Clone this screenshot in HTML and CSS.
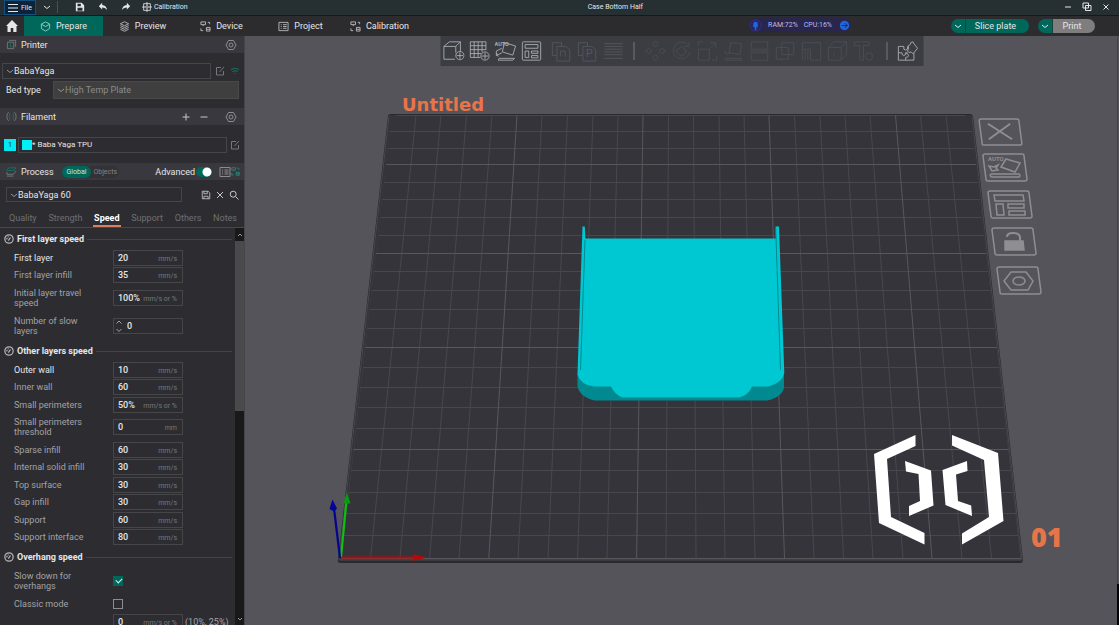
FILE: index.html
```html
<!DOCTYPE html>
<html lang="en">
<head>
<meta charset="utf-8">
<title>Case Bottom Half</title>
<link rel="stylesheet" href="styles.css">
</head>
<body>
<svg class="defs" aria-hidden="true">
  <symbol id="chev" viewBox="0 0 8 8"><path d="M1 3l3 2.500 3-2.500"/></symbol>
  <symbol id="nut" viewBox="0 0 12 12"><path d="M3.500 1.500h5L11 6l-2.500 4.500h-5L1 6z"/><circle cx="6" cy="6" r="2"/></symbol>
  <symbol id="edit" viewBox="0 0 10 10"><path d="M6 1.500H1.500v7.500h7V5M4.500 6l4.500-5"/></symbol>
  <symbol id="gauge" viewBox="0 0 12 12"><circle cx="6" cy="6" r="5"/><path d="M5.200 8L7.800 4.200M3.200 6.500l.6-1.800M4.500 3.300h1"/></symbol>
  <symbol id="device" viewBox="0 0 12 12"><path d="M1 1h5v3H1zM3.500 4v1.500M8.500 1.500h2v2M1 8v2.500h2.500M7 7h4v4H7zM7 9h4"/></symbol>
  <symbol id="list" viewBox="0 0 12 12"><path d="M1 1.500h10v9H1zM3 4h1M5.500 4H9.500M3 6h1M5.500 6H9.500M3 8h1M5.500 8H9.500"/></symbol>
  <symbol id="save" viewBox="0 0 12 12"><path d="M1.500 1.500h7l2 2v7h-9zM3.500 1.500v3h4v-3M3.500 10.500v-3h5v3"/></symbol>
  <symbol id="layout" viewBox="0 0 24 24"><rect x="2" y="2" width="20" height="20" rx="1"/><path d="M5 5h14v4H5zM5 12h4v7H5zM12 12h7v2.500h-7zM12 17h7v2.500h-7z"/></symbol>
</svg>

<header class="titlebar">
  <button class="file"><svg viewBox="0 0 10 10"><path d="M0 1.500h10M0 5h10M0 8.500h10"/></svg>File</button>
  <button class="more" aria-label="More"><svg viewBox="0 0 8 8"><use href="#chev"/></svg></button>
  <button class="tool" aria-label="Save"><svg viewBox="0 0 12 12"><path class="solid" d="M1 1h7l3 3v7H1zM3 2v3h4V2zM3 7v3.500h6V7z" fill-rule="evenodd"/></svg></button>
  <button class="tool" aria-label="Undo"><svg viewBox="0 0 12 12"><path class="solid" d="M5 1L1 5l4 4V6.500c3 0 4.500 1 6 3.500C10.500 6 8.500 3.700 5 3.500z"/></svg></button>
  <button class="tool" aria-label="Redo"><svg viewBox="0 0 12 12"><path class="solid" d="M7 1l4 4-4 4V6.500c-3 0-4.500 1-6 3.500C1.500 6 3.500 3.700 7 3.500z"/></svg></button>
  <button class="calib"><svg viewBox="0 0 12 12"><path d="M2 2h8v8H2zM6 0v4M6 8v4M0 6h4M8 6h4"/><circle cx="6" cy="6" r="1.500"/></svg>Calibration</button>
  <h1>Case Bottom Half</h1>
  <div class="win">
    <button aria-label="Minimize"><svg viewBox="0 0 10 10"><path d="M2 5h6"/></svg></button>
    <button aria-label="Restore"><svg viewBox="0 0 10 10"><path d="M1 1h5.500v5H1zM3.500 3.500H9v5H3.500z"/></svg></button>
    <button aria-label="Close"><svg viewBox="0 0 10 10"><path d="M2.500 2.500l5 5M7.500 2.500l-5 5"/></svg></button>
  </div>
</header>

<nav class="tabs">
  <button class="home" aria-label="Home"><svg viewBox="0 0 14 14"><path class="solid" d="M7 1L1 7h1.500v6h3.200V9h2.600v4h3.200V7H13z"/></svg></button>
  <button class="tab on"><svg viewBox="0 0 12 12"><path d="M6 1l4.500 2.300v5L6 11 1.500 8.300v-5zM1.500 3.500L6 6l4.500-2.500"/></svg>Prepare</button>
  <button class="tab"><svg viewBox="0 0 12 12"><path d="M6 .8L10.500 3 6 5.200 1.500 3zM1.500 5L6 7.200 10.500 5M1.500 7L6 9.200 10.500 7M1.500 9L6 11.200 10.500 9"/></svg>Preview</button>
  <button class="tab"><svg><use href="#device"/></svg>Device</button>
  <button class="tab"><svg><use href="#list"/></svg>Project</button>
  <button class="tab"><svg><use href="#device"/></svg>Calibration</button>
  <div class="usage">
    <svg viewBox="0 0 14 14"><circle class="ring" cx="7" cy="7" r="6"/><path class="blue" d="M4.500 5.500a2.500 2.500 0 0 1 5 0V9h-5zM6.200 9h1.600v3H6.200z"/></svg>
    <span>RAM:72%</span><span>CPU:16%</span>
    <svg viewBox="0 0 14 14"><circle class="blue" cx="7" cy="7" r="5"/><path class="arrow" d="M4 7h6M7.500 4.500L10 7 7.500 9.500"/></svg>
  </div>
  <div class="split"><button class="drop" aria-label="Slice options"><svg><use href="#chev"/></svg></button><button class="act">Slice plate</button></div>
  <div class="split print"><button class="drop" aria-label="Print options"><svg><use href="#chev"/></svg></button><button class="act">Print</button></div>
</nav>

<main>
  <aside>
    <h2 class="bar"><svg class="ic" viewBox="0 0 12 12"><path d="M1.500 3.500h7v7h-7zM3.500 1.500h7v7"/><path class="green" d="M4 8.500h3M5 5v3"/></svg><span>Printer</span><button class="ib end" aria-label="Printer settings"><svg class="nut"><use href="#nut"/></svg></button></h2>
    <div class="printer">
      <div class="line">
        <div class="sel grow"><svg><use href="#chev"/></svg><select aria-label="Printer preset"><option>BabaYaga</option></select></div>
        <button class="ib" aria-label="Edit printer"><svg><use href="#edit"/></svg></button>
        <button class="ib wifi" aria-label="Connection"><svg viewBox="0 0 10 10"><path d="M1 3.500q4-2.500 8 0M2.500 5.500q2.500-1.500 5 0M4.500 7.500h1"/></svg></button>
      </div>
      <div class="line bed"><label for="bed">Bed type</label>
        <div class="sel grow off"><svg><use href="#chev"/></svg><select id="bed"><option>High Temp Plate</option></select></div></div>
    </div>

    <h2 class="bar"><svg class="ic" viewBox="0 0 12 12"><path d="M3 1.500q-2 0-2 4.500t2 4.500M9 1.500q2 0 2 4.500t-2 4.500"/><path class="green" d="M4 2v8M8 2v8"/></svg><span>Filament</span>
      <button class="ib end wide" aria-label="Add filament"><svg class="lit" viewBox="0 0 10 10"><path d="M1.500 5h7M5 1.500v7"/></svg></button>
      <button class="ib wide" aria-label="Remove filament"><svg class="lit" viewBox="0 0 10 10"><path d="M1.500 5h7"/></svg></button>
      <button class="ib gapl" aria-label="Filament settings"><svg class="nut"><use href="#nut"/></svg></button></h2>
    <div class="filament line">
      <button class="slot">1</button>
      <div class="sel grow small"><i class="swatch"></i><select aria-label="Filament preset"><option>* Baba Yaga TPU</option></select></div>
      <button class="ib" aria-label="Edit filament"><svg><use href="#edit"/></svg></button>
    </div>

    <h2 class="bar proc"><svg class="ic" viewBox="0 0 12 12"><path class="green" d="M3 2h8L9 5H1z"/><path d="M1 6.500L1 9h7l3-3.500M1 11h7"/></svg><span>Process</span>
      <div class="scope"><button class="on">Global</button><button>Objects</button></div>
      <label class="adv end" for="adv">Advanced</label><input id="adv" class="switch" type="checkbox" role="switch" checked>
      <button class="ib pair" aria-label="Parameter list"><svg class="nut"><use href="#list"/></svg></button>
      <button class="ib pair teal" aria-label="Compare presets"><svg><use href="#device"/></svg></button></h2>
    <div class="process line">
      <div class="sel grow"><svg><use href="#chev"/></svg><select aria-label="Process preset"><option>BabaYaga 60</option></select></div>
      <div class="acts">
        <button class="ib lit" aria-label="Save preset"><svg><use href="#save"/></svg></button>
        <button class="ib lit" aria-label="Discard"><svg viewBox="0 0 10 10"><path d="M2 2l6 6M8 2L2 8"/></svg></button>
        <button class="ib lit" aria-label="Search"><svg viewBox="0 0 10 10"><circle cx="4.200" cy="4.200" r="3"/><path d="M6.500 6.500L9.500 9.500"/></svg></button>
      </div>
    </div>
    <div class="pages"><button>Quality</button><button>Strength</button><button class="on">Speed</button><button>Support</button><button>Others</button><button>Notes</button></div>

    <div class="scroll">
      <div class="params">
        <section><h3><svg><use href="#gauge"/></svg>First layer speed</h3>
          <div class="rows">
          <div class="row hot"><label for="a1">First layer</label><div class="box"><input id="a1" value="20"><span>mm/s</span></div></div>
          <div class="row"><label for="a2">First layer infill</label><div class="box"><input id="a2" value="35"><span>mm/s</span></div></div>
          <div class="row tall"><label for="a3">Initial layer travel speed</label><div class="box"><input id="a3" value="100%"><span>mm/s or %</span></div></div>
          <div class="row tall"><label for="a4">Number of slow layers</label><div class="box"><svg class="spin" viewBox="0 0 8 14"><path d="M1.500 4.500L4 2l2.500 2.500M1.500 10L4 12.500 6.500 10"/></svg><input id="a4" value="0"></div></div>
          </div></section>
        <section><h3><svg><use href="#gauge"/></svg>Other layers speed</h3>
          <div class="rows">
          <div class="row hot"><label for="b1">Outer wall</label><div class="box"><input id="b1" value="10"><span>mm/s</span></div></div>
          <div class="row"><label for="b2">Inner wall</label><div class="box"><input id="b2" value="60"><span>mm/s</span></div></div>
          <div class="row"><label for="b3">Small perimeters</label><div class="box"><input id="b3" value="50%"><span>mm/s or %</span></div></div>
          <div class="row tall"><label for="b4">Small perimeters threshold</label><div class="box"><input id="b4" value="0"><span>mm</span></div></div>
          <div class="row"><label for="b5">Sparse infill</label><div class="box"><input id="b5" value="60"><span>mm/s</span></div></div>
          <div class="row"><label for="b6">Internal solid infill</label><div class="box"><input id="b6" value="30"><span>mm/s</span></div></div>
          <div class="row"><label for="b7">Top surface</label><div class="box"><input id="b7" value="30"><span>mm/s</span></div></div>
          <div class="row"><label for="b8">Gap infill</label><div class="box"><input id="b8" value="30"><span>mm/s</span></div></div>
          <div class="row"><label for="b9">Support</label><div class="box"><input id="b9" value="60"><span>mm/s</span></div></div>
          <div class="row"><label for="b10">Support interface</label><div class="box"><input id="b10" value="80"><span>mm/s</span></div></div>
          </div></section>
        <section><h3><svg><use href="#gauge"/></svg>Overhang speed</h3>
          <div class="rows">
          <div class="row tall"><label for="c1">Slow down for overhangs</label><input id="c1" class="tick" type="checkbox" checked></div>
          <div class="row"><label for="c2">Classic mode</label><input id="c2" class="tick" type="checkbox"></div>
          <div class="row"><label for="c3"></label><div class="box"><input id="c3" value="0" aria-label="Overhang 10% to 25%"><span>mm/s or %</span></div><span class="range">(10%, 25%)</span></div>
          </div></section>
      </div>
      <div class="track"><svg viewBox="0 0 8 8"><path d="M2 5l2-2 2 2"/></svg><i class="thumb"></i><svg viewBox="0 0 8 8"><path d="M2 3l2 2 2-2"/></svg></div>
    </div>
  </aside>

  <div class="view">
    <svg class="scene" viewBox="245 36 874 589" preserveAspectRatio="xMidYMid slice">
      <defs><clipPath id="plate"><path d="M397 115H965L971 121 1021 559H341L391 121z"/></clipPath></defs>
      <path d="M388 116q0-2 3-2h579q2 0 3 2l50 444q0 3-3 3H341q-4 0-3-3z" fill="#2a292e"/>
      <path d="M389.500 115H971.500L1022 560H339.500z" fill="#35343b"/>
      <path d="M389 116L339 560H1022L972 116" fill="none" stroke="#4a4a4e"/>
      <g clip-path="url(#plate)" fill="none" stroke="#48484c">
        <path d="M341 558L391 115M370.500 558L416 115M400 558L441 115M429.600 558L466.500 115M459 558L492 115M518 558L542 115M548 558L567.500 115M577.500 558L593 115M607 558L618 115M666 558L668.500 115M696 558L693.500 115M725 558L719 115M755 558L744 115M814 558L794.500 115M843.600 558L820 115M873 558L845 115M903 558L870 115M962 558L920.500 115M991.500 558L946 115M1021 558L971 115"/>
        <path d="M330 535.500h700M330 513.500h700M330 492.500h700M330 470.500h700M330 428.500h700M330 407.500h700M330 387.500h700M330 367.500h700M330 328.500h700M330 309.500h700M330 290.500h700M330 271.500h700M330 235.500h700M330 217.500h700M330 199.500h700M330 182.500h700M330 148.500h700M330 131.500h700M330 115.500h700"/>
        <path stroke="#58585b" d="M488.800 558L517 115M636.600 558L643 115M784.500 558L769 115M932 558L895.500 115M330 558.500h700M330 449.500h700M330 347.500h700M330 253.500h700M330 164.500h700"/>
      </g>
      <path d="M577.500 374v12q2 11 17 14.500H767q15-3 17-13v-14z" fill="#008a90"/>
      <path d="M611 386l11 12h118l11-12z" fill="#00a3aa"/>
      <path d="M582.500 226.500h2.300l.6 12H775.800l-.2-12h3.400L784.300 373q-2 10-16 13.500H752q-4 9-12 10.500H622q-7-2-11-10.500H594q-14-2-16.500-12z" fill="#00c8d3"/>
      <path d="M585 240L580.500 370M775.700 228L780.500 370" fill="none" stroke="#008a92"/>
      <g fill="#fff">
        <path d="M915.500 435v11L887 459l4 58 33.500 16v11.500L879 523l-5-69z"/>
        <path d="M952 435v10.500L984 460l5 57-27 16.500v11L1003.500 521 998 453z"/>
        <path d="M905 461l26 9.500 2.500 35L909 516v-10l11-5-1.500-27L906 471.500z"/>
        <path d="M967 461l-24.500 9 3 35L972 516l-.8-10.500L958 501l-2-26.500 11.500-3.500z"/>
      </g>
      <g fill="none" stroke-width="2.200">
        <path d="M341 557.500h75" stroke="#b80808"/><path d="M341 557L346.500 500" stroke="#0bc010"/><path d="M340 558L334 508" stroke="#04048c"/>
      </g>
      <path d="M413 554l14 3.500-14 3.500z" fill="#b80808"/><path d="M343 503.500l4-11 3.500 11z" fill="#0a9a10"/><path d="M329.500 509l3-9.500 4.500 9-3 3z" fill="#04049a"/>
      <text class="name" x="402" y="111">Untitled</text>
      <text class="num" x="1031" y="547">01</text>
      <path d="M1117.500 37V584" stroke="#434247"/><path d="M1118 584V625" stroke="#050505" stroke-width="2"/>
    </svg>

    <div class="toolbar">
      <button aria-label="Add object"><svg viewBox="0 0 24 24"><path d="M14.500 14V7H1.500v14h12M1.500 7l6-5h12l-5 5M19.500 2v10"/><circle cx="19" cy="17" r="4.500"/><path d="M19 13.500v7M15.500 17h7"/></svg></button>
      <button aria-label="Add plate"><svg viewBox="0 0 24 24"><path d="M2 2h17v9M2 2v17h11M6.200 2v17M10.500 2v17M14.800 2v11M2 6.200h17M2 10.500h17M2 14.800h12"/><circle cx="18" cy="17.500" r="4.500"/><path d="M18 14v7M14.500 17.500h7"/></svg></button>
      <button aria-label="Auto orient"><svg viewBox="0 0 24 24"><path d="M11 3l12 3.500-3 10L8.500 13zM8 9L2 12v5l6-3M2 14l2 4M5 20h17l-2 2H4z"/><text class="tag" x="0" y="7">AUTO</text></svg></button>
      <button aria-label="Arrange"><svg><use href="#layout"/></svg></button>
      <div class="dim pad">
        <button disabled aria-label="Copy"><svg viewBox="0 0 24 24"><path d="M2 3h10v4M2 3v14h4M7 7h10l4 4v12H7zM11 18v-6h5v6"/></svg></button>
        <button disabled aria-label="Paste"><svg viewBox="0 0 24 24"><path d="M2 3h10v4M2 3v14h4M7 7h10l4 4v12H7z"/><text class="letter" x="10" y="19">P</text></svg></button>
        <button disabled aria-label="Layers"><svg viewBox="0 0 24 24"><path d="M2 4h20M2 7h20M2 10h20M2 13h20M2 16h20M2 20h20"/></svg></button>
      </div>
      <hr>
      <div class="dim faint">
        <button disabled aria-label="Move"><svg viewBox="0 0 24 24"><path d="M12 1l3 4-3 3-3-3zM12 16l3 3-3 4-3-4zM1 12l4-3 3 3-3 3zM16 12l3-3 4 3-4 3z"/></svg></button>
        <button disabled aria-label="Rotate"><svg viewBox="0 0 24 24"><path d="M20 7A9 9 0 1 0 21 13M20 2v5h-5M6 12l6-5 6 5-6 6z"/></svg></button>
        <button disabled aria-label="Scale"><svg viewBox="0 0 24 24"><path d="M2 10h12v12H2zM2 7V2h5M17 22h5v-5M13 11l8-8M15 3h6v6"/></svg></button>
        <button disabled aria-label="Lay on face"><svg viewBox="0 0 24 24"><path d="M9 3l12 1-2 12-12-2zM2 12l3 4 3-3M3 20h18v2H3z"/></svg></button>
        <button disabled aria-label="Cut"><svg viewBox="0 0 24 24"><path d="M3 2h18v8H3zM3 14h18v8H3zM1 12h22"/></svg></button>
        <button disabled aria-label="Boolean"><svg viewBox="0 0 24 24"><path d="M2 8h13v13H2zM8 3h13v13H8z"/></svg></button>
        <button disabled aria-label="Support painting"><svg viewBox="0 0 24 24"><path d="M2 3h20v19H11V10H2zM2 10v12M5 10v12M8 10v12"/></svg></button>
        <button disabled aria-label="Seam painting"><svg viewBox="0 0 24 24"><path d="M2 8h14v14H2zM2 8l6-6h14l-6 6M22 2v14l-6 6M8 14v4"/></svg></button>
        <button disabled aria-label="Text"><svg viewBox="0 0 24 24"><path d="M2 2h16v4h-6v16H8V6H2z"/><circle cx="18" cy="18" r="4"/></svg></button>
      </div>
      <hr class="w">
      <button aria-label="Assembly view"><svg viewBox="0 0 24 24"><path d="M2 7h6q-1 4 2 4t2-4M2 7v15h17v-8M2 14h4q0 3 2 3t2-3h2M10 22v-3q3 0 3-2t-3-3M13 6l2-1q0-3 3-3l1 2 4 5-5 6-2-2q-3 2-4-1l1-2z"/></svg></button>
    </div>

    <div class="pins">
      <button class="pin p1" aria-label="Delete plate"><svg viewBox="0 0 46 32"><path class="frame" d="M3 2h37q2 0 2 2l3 23q0 2-2 2H6q-2 0-2-2L1 4q0-2 2-2z"/><path class="thick" d="M10 7l25 16M33 7L11 23"/></svg></button>
      <button class="pin p2" aria-label="Orient plate"><svg viewBox="0 0 46 32"><path class="frame" d="M3 2h37q2 0 2 2l3 23q0 2-2 2H6q-2 0-2-2L1 4q0-2 2-2z"/><path d="M24 7l14 4-5 9-14-5zM16 13l-4 2-5-1 3 5 6-1-2-2zM9 22h28q2 2 0 3H10q-3-1-1-3"/><text class="tag" x="6" y="9">AUTO</text></svg></button>
      <button class="pin p3" aria-label="Arrange plate"><svg viewBox="0 0 46 32"><path class="frame" d="M3 2h37q2 0 2 2l3 23q0 2-2 2H6q-2 0-2-2L1 4q0-2 2-2z"/><path d="M7 6h29l1 6H8zM9 15h7l1 11h-7zM21 15h16v4H21zM22 22h16v4H22z"/></svg></button>
      <button class="pin p4" aria-label="Lock plate"><svg viewBox="0 0 46 32"><path class="frame" d="M3 2h37q2 0 2 2l3 23q0 2-2 2H6q-2 0-2-2L1 4q0-2 2-2z"/><path class="fill" d="M14 15h18l1 9H14z"/><path class="thick" d="M16 11q0-4 6-4t7 4v4"/></svg></button>
      <button class="pin p5" aria-label="Plate settings"><svg viewBox="0 0 46 32"><path class="frame" d="M3 2h37q2 0 2 2l3 23q0 2-2 2H6q-2 0-2-2L1 4q0-2 2-2z"/><path d="M15 7h15l7 9-5 9H15l-7-9z"/><ellipse cx="23" cy="16" rx="6" ry="4"/></svg></button>
    </div>
  </div>
</main>
</body>
</html>
```
FILE: styles.css
```css
* { box-sizing: border-box; }
body {
  margin: 0;
  height: 100vh;
  display: flex;
  flex-direction: column;
  overflow: hidden;
  background: #2d2d31;
  color: #e6e6e8;
  font: 9px/10px Roboto, "Noto Sans", sans-serif;
}
button, input, select { font: inherit; color: inherit; background: none; border: 0; padding: 0; margin: 0; }
button { display: flex; align-items: center; justify-content: center; }
select { appearance: none; width: 100%; outline: 0; }
option { background: #2d2d31; }
svg { display: block; flex: none; fill: none; stroke: currentColor; stroke-width: 1; }
.solid { fill: currentColor; stroke: none; }
.defs { position: absolute; width: 0; height: 0; }

.titlebar {
  display: flex;
  align-items: center;
  height: 16px;
  padding: 0 4px 2px;
  flex: none;
  background: #262f31;
  border-bottom: 1px solid #14191a;
  font-size: 7px;
}
.titlebar svg { width: 10px; height: 10px; }
.file { width: 32px; height: 15px; gap: 3px; background: #0c2338; border: 1px solid #14507f; align-self: flex-start; }
.more { width: 22px; height: 12px; margin-right: 10px; border-right: 1px solid #4a5254; }
.titlebar .more svg { width: 8px; height: 8px; }
.tool { width: 23px; }
.calib { gap: 2px; margin-left: 5px; }
.titlebar h1 { flex: 1; margin: 0; padding-right: 20px; text-align: center; font-size: 7px; font-weight: 400; }
.win { display: flex; gap: 9px; padding-right: 4px; }

.tabs { display: flex; align-items: center; flex: none; height: 20px; padding-right: 24px; background: #2c2c2f; }
.home { width: 24px; }
.home svg { width: 14px; height: 14px; }
.tab { width: 79px; height: 20px; gap: 5px; }
.tab svg { width: 11px; height: 11px; color: #b9b9bb; }
.tab.on { background: #00675b; }
.tab.on svg { color: #8fd0c6; }
.usage {
  display: flex;
  align-items: center;
  gap: 6px;
  height: 14px;
  margin: 0 100px 2px auto;
  border-radius: 7px;
  background: #29264d;
  color: #b9bce6;
  font-size: 7px;
}
.usage svg { width: 13px; height: 13px; }
.ring { fill: #252564; stroke: #33337c; }
.blue { fill: #1f66dd; stroke: none; }
.arrow { stroke: #14265c; }
.split { display: flex; height: 14px; }
.split button { height: 14px; background: #00675b; }
.drop { width: 15px; border-radius: 7px 0 0 7px; }
.split .drop { border-right: 1px solid #20403c; }
.drop svg { width: 8px; height: 8px; }
.act { width: 63px; padding-right: 4px; border-radius: 0 7px 7px 0; }
.print { margin-left: 9px; }
.print .act { width: 42px; background: #807d7f; }

main { flex: 1; min-height: 0; display: flex; }
aside { width: 245px; flex: none; display: flex; flex-direction: column; border-right: 1px solid #46454b; }
.bar {
  display: flex;
  align-items: center;
  height: 17px;
  flex: none;
  margin: 0;
  padding: 0 7px 0 6px;
  font-size: 9px;
  font-weight: 400;
  background: #39383e;
}
.ic { width: 11px; height: 11px; margin-right: 4px; color: #77777b; }
.green { stroke: #0b7768; }
.end { margin-left: auto; }
.ib { width: 12px; height: 12px; color: #77777b; }
.ib svg { width: 10px; height: 10px; }
.ib .nut { width: 12px; height: 12px; color: #8c8c90; }
.ib .lit, .ib.lit { color: #c8c8ca; }
.wide { width: 18px; }
.gapl { margin-left: 12px; }
.wifi { color: #0b7768; }
.teal { color: #1c9584; }
.line { display: flex; align-items: center; gap: 3px; }
.grow { flex: 1; }
.sel { display: flex; align-items: center; height: 16px; padding-left: 3px; border: 1px solid #45454a; }
.sel svg { width: 8px; height: 8px; color: #98989b; }
.printer { padding: 10px 3px 9px 2px; }
.printer .line + .line { margin-top: 2px; }
.bed { padding: 0 2px 0 4px; }
.bed label { width: 44px; }
.bed .sel { height: 18px; background: #3f3f40; border-color: #49494a; color: #8b8b8d; }
.filament { padding: 12px 3px 10px 4px; gap: 2px; }
.slot { width: 12px; height: 12px; background: #00eaf2; color: #11474c; font-size: 8px; }
.small { font-size: 8px; }
.swatch { width: 10px; height: 10px; flex: none; background: #00f0f8; }
.proc { padding-right: 3px; }
.scope { display: flex; margin-left: 8px; border-radius: 6px; background: #323237; font-size: 7px; }
.scope button { height: 12px; padding: 0 2px; color: #858589; }
.scope .on { padding: 0 5px; border-radius: 6px; background: #00675b; color: #c6e6e1; }
.switch { appearance: none; width: 16px; height: 10px; margin: 0 7px 0 1px; border-radius: 5px; background: radial-gradient(circle at 11px 5px, #fff 4px, #00675b 5px); }
.pair { width: 11px; }
.pair svg { width: 9px; height: 9px; }
.process { padding: 7px 4px 7px 6px; }
.process .sel { height: 15px; }
.acts { display: flex; gap: 2px; padding-left: 15px; }
.pages { display: flex; justify-content: space-between; height: 19px; flex: none; padding: 2px 6px 0 8px; border-bottom: 1px solid #47474c; }
.pages button { color: #6f6f74; border-bottom: 2px solid transparent; padding: 0 1px; }
.pages .on { color: #fff; font-weight: 700; border-color: #d87f63; }

.scroll { flex: 1; min-height: 0; display: flex; overflow: hidden; }
.params { flex: 1; padding: 1px 3px 0 4px; }
section { margin-bottom: 1px; }
h3 { display: flex; align-items: center; height: 20px; margin: 0; gap: 3px; font-size: 9px; font-weight: 700; }
h3 svg { width: 10px; height: 10px; stroke-width: 1.500; color: #b4b4b7; }
h3::after { content: ""; flex: 1; height: 1px; background: #434348; }
.row { display: flex; align-items: center; height: 17px; padding-left: 10px; color: #a2a2a6; }
.row:nth-child(even) { height: 18px; }
.row.tall { height: 28px; }
.row label { width: 80px; margin-right: 19px; }
.hot label { color: #e6e6e8; }
.box { display: flex; align-items: center; width: 70px; height: 16px; padding: 0 5px 0 4px; border: 1px solid #45454a; color: #e6e6e8; }
.box input { flex: 1; min-width: 0; width: 0; font-weight: 500; }
.box span { color: #77777b; font-size: 7px; padding-top: 2px; }
.spin { width: 8px; height: 14px; margin: 0 1px 0 -3px; color: #a2a2a6; }
.box .spin + input { padding-left: 3px; }
.tick { appearance: none; width: 10px; height: 10px; border: 1px solid #8d8d91; }
.tick:checked { border-color: #00675b; background: #00675b; position: relative; }
.tick:checked::after { content: ""; position: absolute; left: 2px; top: 1px; width: 5px; height: 3px; border: solid #d6f0ec; border-width: 0 0 1px 1px; rotate: -45deg; }
.range { margin-left: 2px; white-space: nowrap; }
.track { width: 9px; display: flex; flex-direction: column; align-items: center; background: #19191a; }
.track svg { width: 8px; height: 8px; margin: 3px 0 2px; color: #98989b; }
.thumb { width: 9px; height: 170px; margin-bottom: auto; background: #4a4a4c; }

.view { flex: 1; min-width: 0; position: relative; background: #55545a; overflow: hidden; }
.scene { position: absolute; inset: 0; width: 100%; height: 100%; stroke: none; }
.name, .num { fill: #e8744a; font-weight: 800; }
.name { font-family: "DejaVu Sans", sans-serif; font-size: 18px; }
.num { font-family: "Open Sans", sans-serif; font-size: 27px; }
.toolbar {
  position: absolute;
  top: 0;
  left: 50%;
  translate: -50%;
  display: flex;
  align-items: center;
  height: 30px;
  padding: 0 3px 0 0;
  background: #3b3d43;
  color: #a9acaf;
}
.toolbar button { width: 26px; height: 26px; }
.toolbar svg { width: 22px; height: 22px; }
.tag { fill: currentColor; stroke: none; font-size: 6px; font-weight: 700; }
.letter { fill: currentColor; stroke: none; font-size: 12px; }
.dim { display: flex; color: #54575c; }
.faint { color: #4b4e54; }
.pad { padding-left: 4px; }
.toolbar hr { width: 1px; height: 18px; margin: 0 8px 0 7px; border: 0; background: #77797d; }
.toolbar .w { margin: 0 7px 0 10px; }
.pin { position: absolute; color: #8f8e93; }
.pin svg { width: 46px; height: 32px; stroke-width: 1.500; }
.thick { stroke-width: 2; }
.fill { fill: currentColor; }
.p1 { left: 733px; top: 81px; }
.p1 svg { width: 45px; height: 31px; }
.p2 { left: 737px; top: 116px; }
.p3 { left: 742px; top: 153px; }
.p4 { left: 746px; top: 190px; }
.p5 { left: 751px; top: 229px; }
```
